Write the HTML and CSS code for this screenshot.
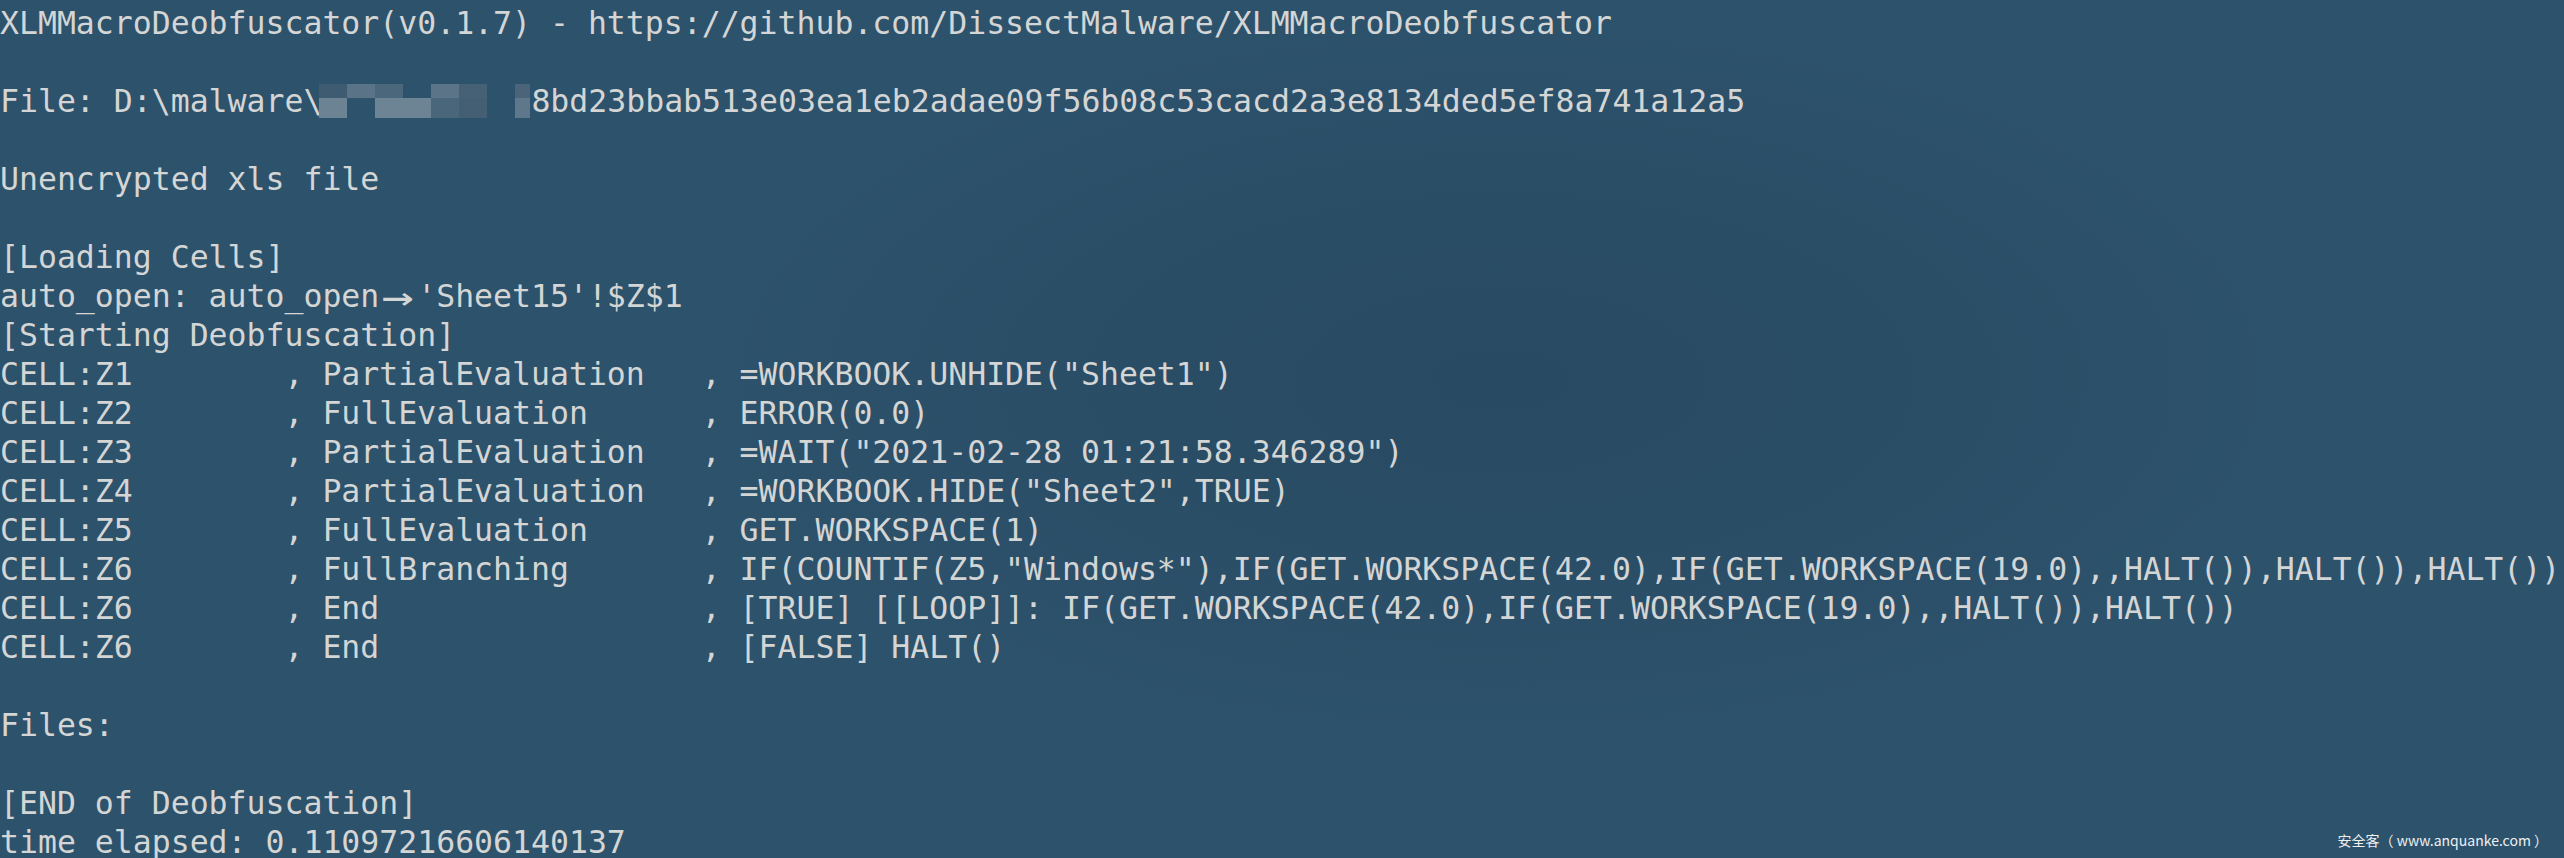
FILE: index.html
```html
<!DOCTYPE html>
<html lang="en">
<head>
<meta charset="utf-8">
<title>XLMMacroDeobfuscator</title>
<link rel="stylesheet" href="styles.css">
</head>
<body>
<main class="term">
  <div class="line">XLMMacroDeobfuscator(v0.1.7) - https://github.com/DissectMalware/XLMMacroDeobfuscator</div>
  <div class="line"></div>
  <div class="line">File: D:\malware\<span class="mosaic" aria-hidden="true"><i class="b t1"></i><i class="b t2"></i><i class="b t3"></i><i class="b"></i><i class="b t5"></i><i class="b t6"></i><i class="b"></i><i class="b t8"></i><i class="b u1"></i><i class="b"></i><i class="b u3"></i><i class="b u4"></i><i class="b u5"></i><i class="b u6"></i><i class="b"></i><i class="b u8"></i></span>8bd23bbab513e03ea1eb2adae09f56b08c53cacd2a3e8134ded5ef8a741a12a5</div>
  <div class="line"></div>
  <div class="line">Unencrypted xls file</div>
  <div class="line"></div>
  <div class="line">[Loading Cells]</div>
  <div class="line">auto_open: auto_open<span class="arrow">→</span>'Sheet15'!$Z$1</div>
  <div class="line">[Starting Deobfuscation]</div>
  <div class="line">CELL:Z1        , PartialEvaluation   , =WORKBOOK.UNHIDE("Sheet1")</div>
  <div class="line">CELL:Z2        , FullEvaluation      , ERROR(0.0)</div>
  <div class="line">CELL:Z3        , PartialEvaluation   , =WAIT("2021-02-28 01:21:58.346289")</div>
  <div class="line">CELL:Z4        , PartialEvaluation   , =WORKBOOK.HIDE("Sheet2",TRUE)</div>
  <div class="line">CELL:Z5        , FullEvaluation      , GET.WORKSPACE(1)</div>
  <div class="line">CELL:Z6        , FullBranching       , IF(COUNTIF(Z5,"Windows*"),IF(GET.WORKSPACE(42.0),IF(GET.WORKSPACE(19.0),,HALT()),HALT()),HALT())</div>
  <div class="line">CELL:Z6        , End                 , [TRUE] [[LOOP]]: IF(GET.WORKSPACE(42.0),IF(GET.WORKSPACE(19.0),,HALT()),HALT())</div>
  <div class="line">CELL:Z6        , End                 , [FALSE] HALT()</div>
  <div class="line"></div>
  <div class="line">Files:</div>
  <div class="line"></div>
  <div class="line">[END of Deobfuscation]</div>
  <div class="line">time elapsed: 0.11097216606140137</div>
</main>
<div class="watermark">安全客（ www.anquanke.com ）</div>
</body>
</html>
```
FILE: styles.css
```css
html, body {
  margin: 0;
  padding: 0;
}

body {
  width: 2564px;
  height: 858px;
  overflow: hidden;
  position: relative;
  background-color: #2d526b;
  background-image:
    radial-gradient(ellipse 1100px 500px at 1500px 380px, rgba(30, 58, 82, 0.35), rgba(30, 58, 82, 0) 75%);
}

.term {
  display: flex;
  flex-direction: column;
  padding-top: 4px;
  font-family: "DejaVu Sans Mono", "Liberation Mono", monospace;
  font-size: 31.5px;
  line-height: 39px;
  color: #d4d5d5;
}

.line {
  height: 39px;
  white-space: pre;
}

.arrow {
  display: inline-block;
  width: 2ch;
  text-align: center;
  transform: scale(1.7, 1.25);
}

.mosaic {
  display: inline-grid;
  vertical-align: top;
  grid-template-columns: repeat(6, 28px) 28px 15px;
  grid-template-rows: 14px 20px;
  width: 211px;
  margin-left: -3px;
  margin-right: 1px;
  padding-top: 2px;
}

.b { display: block; }
.t1 { background: #3f5b71; }
.t2 { background: #5b7387; }
.t3 { background: #4b677c; }
.t5 { background: #5b7488; }
.t6 { background: #466076; }
.t8 { background: #4b6479; }
.u1 { background: #6b8393; }
.u3 { background: #6c8494; }
.u4 { background: #6c8494; }
.u5 { background: #4a667b; }
.u6 { background: #445e74; }
.u8 { background: #5e778a; }

.watermark {
  position: absolute;
  right: 16px;
  bottom: 8px;
  font-family: "Noto Sans CJK SC", "Noto Sans", sans-serif;
  font-size: 14px;
  line-height: 20px;
  color: #eef0f2;
}
```
